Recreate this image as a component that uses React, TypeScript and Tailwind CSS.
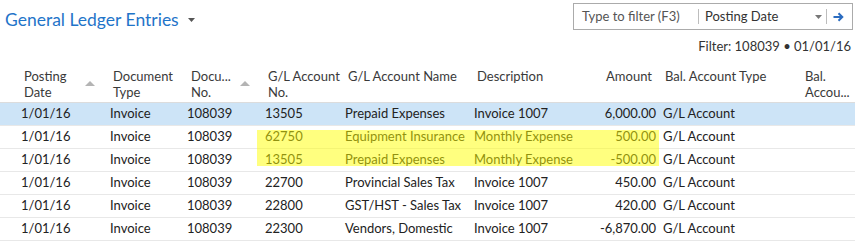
import React from "react";

type Row = {
  date: string;
  type: string;
  doc: string;
  acc: string;
  name: string;
  desc: string;
  amount: string;
  bal: string;
};

const rows: Row[] = [
  { date: "1/01/16", type: "Invoice", doc: "108039", acc: "13505", name: "Prepaid Expenses", desc: "Invoice 1007", amount: "6,000.00", bal: "G/L Account" },
  { date: "1/01/16", type: "Invoice", doc: "108039", acc: "62750", name: "Equipment Insurance", desc: "Monthly Expense", amount: "500.00", bal: "G/L Account" },
  { date: "1/01/16", type: "Invoice", doc: "108039", acc: "13505", name: "Prepaid Expenses", desc: "Monthly Expense", amount: "-500.00", bal: "G/L Account" },
  { date: "1/01/16", type: "Invoice", doc: "108039", acc: "22700", name: "Provincial Sales Tax", desc: "Invoice 1007", amount: "450.00", bal: "G/L Account" },
  { date: "1/01/16", type: "Invoice", doc: "108039", acc: "22800", name: "GST/HST - Sales Tax", desc: "Invoice 1007", amount: "420.00", bal: "G/L Account" },
  { date: "1/01/16", type: "Invoice", doc: "108039", acc: "22300", name: "Vendors, Domestic", desc: "Invoice 1007", amount: "-6,870.00", bal: "G/L Account" },
];

function SortArrow() {
  return (
    <svg width="10" height="5" viewBox="0 0 10 5" className="absolute right-[7px] top-[13px]">
      <path d="M0 5 L5 0 L10 5 Z" fill="#b4b4b4" />
    </svg>
  );
}

export default function App() {
  return (
    <div
      className="relative w-[855px] h-[244px] bg-white overflow-hidden text-[#222]"
      style={{ fontFamily: 'Lato, "Open Sans", sans-serif' }}
    >
      {/* Top bar */}
      <div className="flex items-start justify-between h-[36px]">
        <div className="flex items-center pl-[5px] pt-[7px]">
          <span className="text-[17.5px] leading-[26px] text-[#1f74c9]">General Ledger Entries</span>
          <svg width="7" height="4" viewBox="0 0 7 4" className="ml-[9px] mt-[-1px]">
            <path d="M0 0 L7 0 L3.5 4 Z" fill="#555" />
          </svg>
        </div>
        <div className="mt-[3px] mr-[2px] w-[280px] h-[27px] border border-[#ababab] flex items-center text-[13px]">
          <span className="pl-[8px] w-[124px] text-[#555] whitespace-nowrap">Type to filter (F3)</span>
          <span className="w-px h-[15px] bg-[#bdbdbd]" />
          <span className="pl-[6px] flex-1 text-[#333] whitespace-nowrap">Posting Date</span>
          <svg width="7" height="4" viewBox="0 0 7 4" className="mr-[4px]">
            <path d="M0 0 L7 0 L3.5 4 Z" fill="#777" />
          </svg>
          <span className="w-px h-[15px] bg-[#bdbdbd]" />
          <svg width="11" height="10" viewBox="0 0 11 10" className="ml-[6px] mr-[8px]">
            <path d="M0.5 5 H9 M5.5 1.2 L9.3 5 L5.5 8.8" stroke="#2b6cc0" strokeWidth="2" fill="none" />
          </svg>
        </div>
      </div>

      {/* Filter line */}
      <div className="flex justify-end pr-[4px] h-[22px] items-center text-[13px] text-[#333]">
        Filter: 108039 • 01/01/16
      </div>

      {/* Header */}
      <div className="flex pl-[13px] h-[45px] pt-[10px] border-b border-[#dcdcdc] text-[13px] leading-[16px] text-[#3a3a3a] whitespace-nowrap">
        <div className="relative w-[89px] pl-[11px]">Posting<br />Date<SortArrow /></div>
        <div className="w-[77px] pl-[11px]">Document<br />Type</div>
        <div className="relative w-[78px] pl-[12px]">Docu...<br />No.<SortArrow /></div>
        <div className="w-[80px] pl-[11px]">G/L Account<br />No.</div>
        <div className="w-[129px] pl-[11px]">G/L Account Name</div>
        <div className="w-[100px] pl-[11px]">Description</div>
        <div className="w-[93px] pr-[7px] text-right">Amount</div>
        <div className="w-[141px] pl-[6px]">Bal. Account Type</div>
        <div className="flex-1 pl-[5px]">Bal.<br />Accou...</div>
      </div>

      {/* Rows */}
      {rows.map((r, i) => (
        <div
          key={i}
          className={
            "flex pl-[13px] h-[23px] items-center border-b border-[#e8e8e8] text-[13px] whitespace-nowrap " +
            (i === 0 ? "bg-[#cde4f7]" : "bg-white")
          }
        >
          <div className="w-[89px] pl-[8px]">{r.date}</div>
          <div className="w-[77px] pl-[8px]">{r.type}</div>
          <div className="w-[78px] pl-[8px]">{r.doc}</div>
          <div className="w-[80px] pl-[8px]">{r.acc}</div>
          <div className="w-[129px] pl-[8px]">{r.name}</div>
          <div className="w-[100px] pl-[8px]">{r.desc}</div>
          <div className="w-[93px] pr-[3px] text-right">{r.amount}</div>
          <div className="w-[141px] pl-[4px]">{r.bal}</div>
          <div className="flex-1" />
        </div>
      ))}

      {/* Highlighter annotation */}
      <div className="absolute left-[257px] top-[130px] w-[402px] h-[36px] bg-[rgba(255,255,0,0.5)] pointer-events-none" />
    </div>
  );
}
